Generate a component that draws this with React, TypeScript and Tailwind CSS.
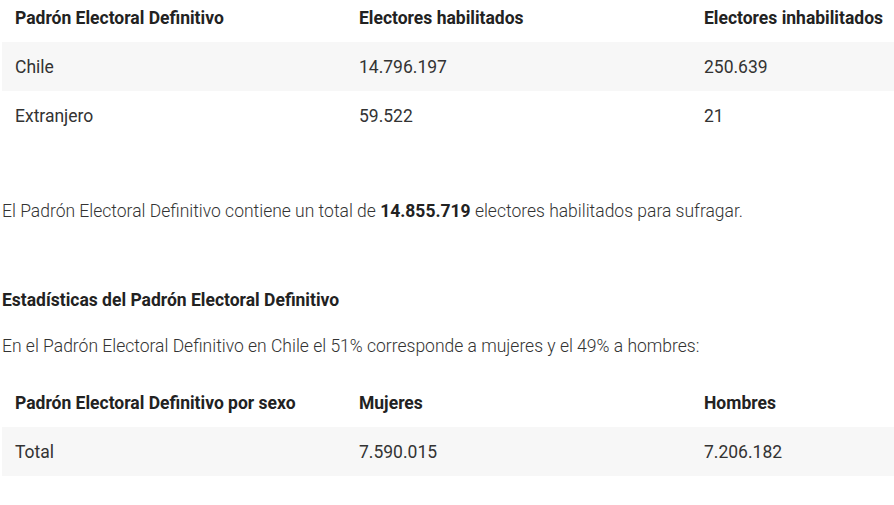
import React from "react";

const padron = [
  { lugar: "Chile", habilitados: "14.796.197", inhabilitados: "250.639" },
  { lugar: "Extranjero", habilitados: "59.522", inhabilitados: "21" },
];

const Row = ({ cells, shaded }: { cells: string[]; shaded?: boolean }) => (
  <div
    className={`grid grid-cols-[344px_345px_1fr] h-[49px] items-center pl-[13px] pt-[2px] text-[17.5px] text-[#333] ${
      shaded ? "bg-[#f7f7f7]" : ""
    }`}
  >
    {cells.map((c, i) => (
      <div key={i} className="whitespace-nowrap">
        {c}
      </div>
    ))}
  </div>
);

const Head = ({ cells, className }: { cells: string[]; className?: string }) => (
  <div
    className={`grid grid-cols-[344px_345px_1fr] pl-[13px] text-[17.5px] font-bold text-[#222] ${className ?? ""}`}
  >
    {cells.map((c, i) => (
      <div key={i} className="whitespace-nowrap">
        {c}
      </div>
    ))}
  </div>
);

export default function App() {
  return (
    <section
      className="w-[894px] h-[505px] overflow-hidden bg-white pl-[2px]"
      style={{ fontFamily: "Roboto, 'Liberation Sans', sans-serif" }}
    >
      {/* Tabla padrón */}
      <Head
        className="h-[42px] pt-[5px]"
        cells={["Padrón Electoral Definitivo", "Electores habilitados", "Electores inhabilitados"]}
      />
      {padron.map((p, i) => (
        <Row key={p.lugar} shaded={i === 0} cells={[p.lugar, p.habilitados, p.inhabilitados]} />
      ))}

      <p className="mt-[58px] text-[17.5px] leading-[26px] font-light text-[#333]">
        El Padrón Electoral Definitivo contiene un total de{" "}
        <strong className="font-bold text-[#222]">14.855.719</strong> electores habilitados para sufragar.
      </p>

      <h3 className="mt-[63px] text-[17.5px] leading-[26px] font-bold text-[#222]">
        Estadísticas del Padrón Electoral Definitivo
      </h3>
      <p className="mt-[20px] text-[17.5px] leading-[26px] font-light text-[#333]">
        En el Padrón Electoral Definitivo en Chile el 51% corresponde a mujeres y el 49% a hombres:
      </p>

      {/* Tabla por sexo */}
      <div className="mt-[19px]">
        <Head
          className="h-[49px] items-center pt-[2px]"
          cells={["Padrón Electoral Definitivo por sexo", "Mujeres", "Hombres"]}
        />
        <Row shaded cells={["Total", "7.590.015", "7.206.182"]} />
      </div>
    </section>
  );
}
